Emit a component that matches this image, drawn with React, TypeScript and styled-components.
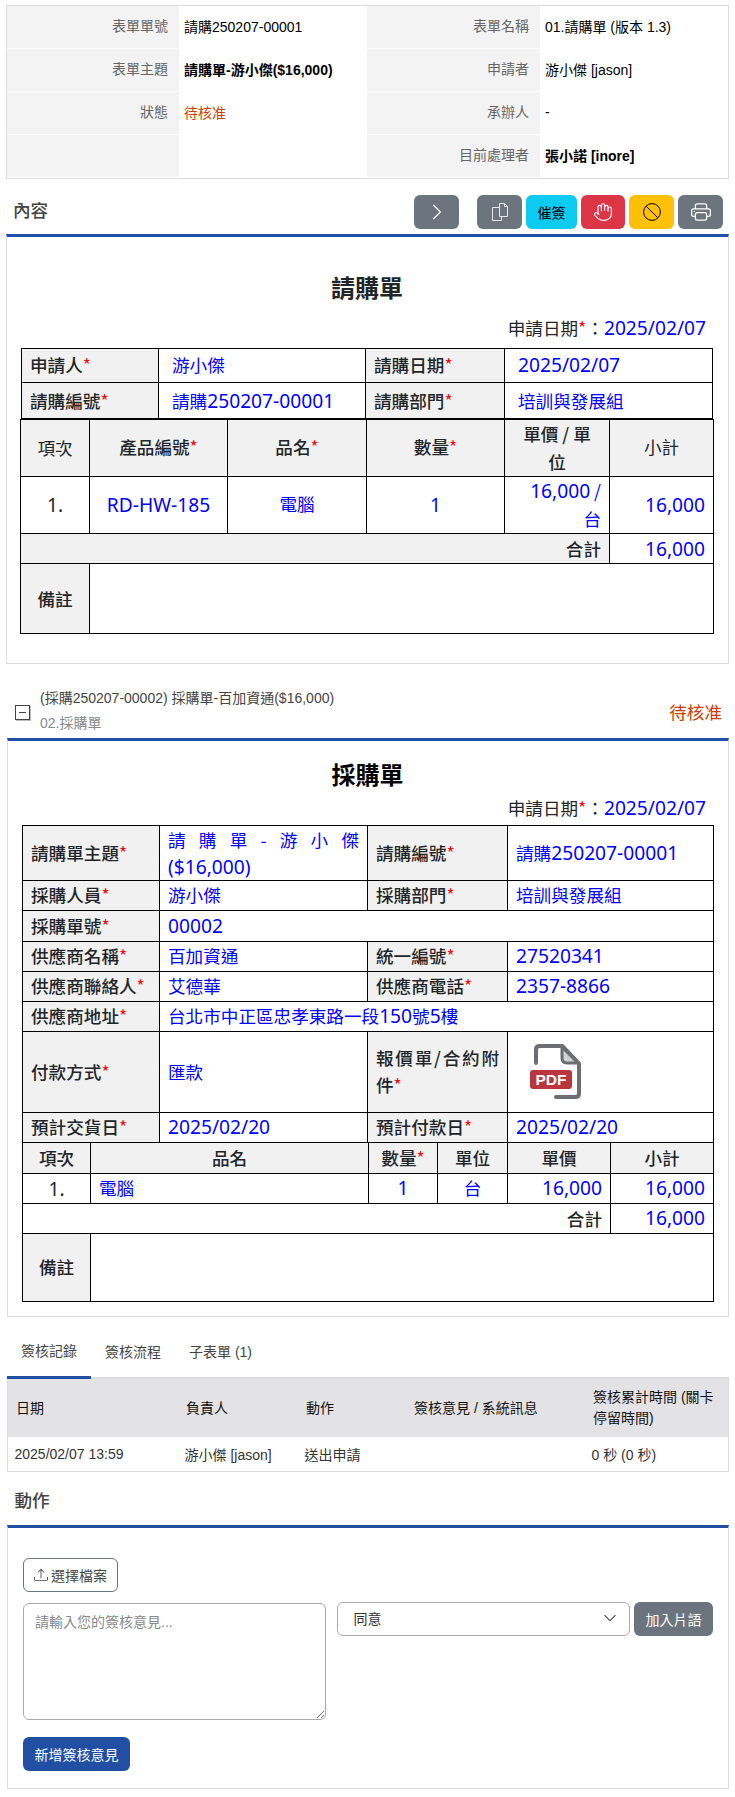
import React from "react";
import styled, { createGlobalStyle } from "styled-components";
import { BsChevronRight, BsPrinter, BsUpload, BsChevronDown } from "react-icons/bs";
import { Hand } from "lucide-react";

const BLUE = "#214fa4";
const BORDER = "#dcdcdc";
const SANS = `"Liberation Sans", "Noto Sans CJK TC", sans-serif`;
const FORM = `"Noto Sans CJK TC", "Noto Sans", sans-serif`;

const Global = createGlobalStyle`
  html, body { margin: 0; padding: 0; background: #fff; }
  body { font-family: ${SANS}; font-size: 14px; color: #333; }
  * { box-sizing: border-box; }
`;

const Page = styled.div`
  width: 735px;
  padding: 5px 6px 8px 6px;
`;

const InfoGrid = styled.div`
  display: grid;
  grid-template-columns: 172px 188px 173px 188px;
  grid-auto-rows: 43px;
  border: 1px solid ${BORDER};
`;
const InfoLabel = styled.div`
  display: flex;
  align-items: center;
  justify-content: flex-end;
  padding: 0 11px 4px 0;
  background: #f3f3f3;
  border-bottom: 1px solid #fff;
  color: #666;
`;
const InfoValue = styled.div<{ $bold?: boolean; $status?: boolean }>`
  display: flex;
  align-items: center;
  padding: 0 0 4px 5px;
  color: ${(p) => (p.$status ? "#cc3d00" : "#000")};
  font-weight: ${(p) => (p.$bold ? 700 : 400)};
`;

const HeadingRow = styled.div`
  display: flex;
  align-items: center;
  justify-content: space-between;
  margin-top: 16px;
  padding: 0 6px 5px 7px;
`;
const HeadingTitle = styled.h2`
  margin: 0;
  padding-bottom: 2px;
  font: 500 17.6px/26px ${SANS};
  color: #444;
`;
const ButtonBar = styled.div`
  display: flex;
  align-items: center;
  gap: 4px;
`;
const IconButton = styled.button<{ $bg: string; $fg?: string; $w?: number; $mr?: number }>`
  display: flex;
  align-items: center;
  justify-content: center;
  width: ${(p) => p.$w ?? 45}px;
  height: 34px;
  margin-right: ${(p) => p.$mr ?? 0}px;
  padding: 0;
  border: 0;
  border-radius: 6px;
  background: ${(p) => p.$bg};
  color: ${(p) => p.$fg ?? "#fff"};
  font: 400 14px ${SANS};
`;

const Card = styled.div<{ $bottom: number }>`
  border: 1px solid ${BORDER};
  border-top: 3px solid ${BLUE};
  padding: 0 15px ${(p) => p.$bottom}px 14px;
`;
const FormTitle = styled.h1<{ $top: number; $color: string }>`
  margin: ${(p) => p.$top}px 0 0;
  text-align: center;
  font: 700 24px/32px ${FORM};
  color: ${(p) => p.$color};
`;
const DateLine = styled.div<{ $top: number; $bottom: number }>`
  margin: ${(p) => p.$top}px 7px ${(p) => p.$bottom}px 0;
  text-align: right;
  font: 400 17.6px/28px ${FORM};
  color: #212529;
`;
const Star = styled.span`
  color: #f00;
  font-weight: 400;
`;
const Blue = styled.span`
  color: #00f;
`;
const Lat = styled.span`
  font-family: "Noto Sans", sans-serif;
  font-size: 19.2px;
  font-weight: 400;
  line-height: 1;
`;

const FormTable = styled.table<{ $wide?: boolean; $lh: number; $join?: boolean }>`
  width: ${(p) => (p.$wide ? 693 : 691)}px;
  margin: ${(p) => (p.$join ? "-1px" : "0")} ${(p) => (p.$wide ? "-1px" : "0")} 0;
  table-layout: fixed;
  border-collapse: collapse;
  font: 400 17.6px/${(p) => p.$lh}px ${FORM};
  color: #212529;
`;
const Col = styled.col<{ $w: number }>`
  width: ${(p) => p.$w}px;
`;
const Row = styled.tr<{ $h: number }>`
  height: ${(p) => p.$h}px;
`;
const LabelCell = styled.th<{ $align?: string; $weight?: number; $tight?: boolean }>`
  padding: 0 8px ${(p) => (p.$tight ? 0 : 2)}px;
  border: 1px solid #000;
  background: #f1f1f1;
  text-align: ${(p) => p.$align ?? "justify"};
  font-weight: ${(p) => p.$weight ?? 500};
`;
const ValueCell = styled.td<{ $align?: string; $pad?: number; $tight?: boolean }>`
  padding: 0 8px ${(p) => (p.$tight ? 0 : 2)}px ${(p) => p.$pad ?? 8}px;
  border: 1px solid #000;
  text-align: ${(p) => p.$align ?? "justify"};
  color: #00f;
`;
const PlainCell = styled.td<{ $align?: string }>`
  padding: 0 8px;
  border: 1px solid #000;
  text-align: ${(p) => p.$align ?? "right"};
  font-weight: 500;
`;
const TotalCell = styled(PlainCell)<{ $shade?: boolean }>`
  background: ${(p) => (p.$shade ? "#f1f1f1" : "#fff")};
`;

const SubSection = styled.section`
  margin-left: 1px;
`;
const SubHeader = styled.div`
  display: flex;
  align-items: center;
  margin-top: 21px;
  padding: 0 7px 3px 8px;
`;
const Toggle = styled.span`
  display: flex;
  align-items: center;
  justify-content: center;
  flex: none;
  width: 15px;
  height: 15px;
  margin: 4px 10px 0 0;
  border: 1px solid #444;
  box-shadow: 1px 1px 0 #bbb;
`;
const ToggleBar = styled.span`
  width: 7px;
  height: 1px;
  background: #444;
`;
const SubText = styled.div`
  flex: 1;
`;
const SubTitle = styled.div`
  line-height: 26px;
  color: #444;
`;
const SubMeta = styled.div`
  line-height: 24px;
  color: #888;
`;
const SubStatus = styled.div`
  margin-top: 4px;
  font: 400 17.6px/26px ${FORM};
  color: #cc3d00;
`;

const Tabs = styled.div`
  display: flex;
  align-items: flex-start;
  margin-top: 22px;
  border-bottom: 2px solid ${BORDER};
`;
const Tab = styled.div<{ $active?: boolean }>`
  height: ${(p) => (p.$active ? 40 : 38)}px;
  padding: ${(p) => (p.$active ? "0" : "1px")} 14px 0;
  margin-bottom: ${(p) => (p.$active ? -2 : 0)}px;
  border-bottom: ${(p) => (p.$active ? `3px solid ${BLUE}` : "0")};
  line-height: 24px;
  color: #444;
`;

const LogBox = styled.div`
  border: 1px solid ${BORDER};
  border-top: 0;
`;
const LogTable = styled.table`
  width: 100%;
  table-layout: fixed;
  border-collapse: collapse;
`;
const LogHead = styled.th`
  height: 58px;
  padding: 0 8px;
  background: #e3e3e6;
  text-align: left;
  font-weight: 400;
  line-height: 21px;
  color: #111;
`;
const LogCell = styled.td`
  height: 34px;
  padding: 0 7px 0 6.5px;
  color: #333;
`;

const ActionTitle = styled.h2`
  margin: 17px 0 12px;
  padding-left: 7.5px;
  font: 500 17.6px/24px ${SANS};
  color: #444;
`;
const ActionBody = styled.div`
  padding: 30px 0 0 1px;
`;
const UploadButton = styled.button`
  display: flex;
  align-items: center;
  gap: 3px;
  width: 95px;
  height: 34px;
  padding: 0 0 0 10px;
  border: 1px solid #6c757d;
  border-radius: 6px;
  background: #fff;
  color: #444;
  font: 400 14px ${SANS};
`;
const InputRow = styled.div`
  display: flex;
  align-items: flex-start;
  margin-top: 10px;
`;
const Comment = styled.textarea`
  display: block;
  width: 303px;
  height: 117px;
  margin: 1px 11px 0 0;
  padding: 8px 11px;
  border: 1px solid #aaa;
  border-radius: 6px;
  font: 400 14px/20px ${SANS};
  outline: 0;
  &::placeholder {
    color: #888;
  }
`;
const SelectWrap = styled.div`
  position: relative;
  width: 294px;
  margin-right: 4px;
`;
const Select = styled.select`
  display: block;
  width: 100%;
  height: 34px;
  padding: 0 30px 0 16px;
  border: 1px solid #aaa;
  border-radius: 6px;
  background: #fff;
  appearance: none;
  color: #333;
  font: 400 14px ${SANS};
`;
const SelectArrow = styled.span`
  position: absolute;
  top: 9px;
  right: 13px;
  display: flex;
  color: #333;
  pointer-events: none;
`;
const SmallButton = styled.button`
  width: 79px;
  height: 34px;
  padding: 0;
  border: 0;
  border-radius: 6px;
  background: #6c757d;
  color: #fff;
  font: 400 14px ${SANS};
`;
const SubmitButton = styled.button`
  display: block;
  width: 107px;
  height: 34px;
  margin-top: 17px;
  padding: 0;
  border: 0;
  border-radius: 6px;
  background: ${BLUE};
  color: #fff;
  font: 400 14px ${SANS};
`;
const PdfWrap = styled.div`
  display: flex;
  padding-left: 14px;
`;

const PdfIcon = () => (
  <svg width="52" height="56" viewBox="0 0 52 56" role="img" aria-label="PDF">
    <path d="M6 19V5.5Q6 2 9.5 2H32.5L49 19.5V49.5Q49 53 45.5 53H26" fill="none" stroke="#6d6e71" strokeWidth="4" strokeLinecap="round" strokeLinejoin="round" />
    <path d="M32 3V14Q32 19 37 19H48Z" fill="#d2d2d3" stroke="#6d6e71" strokeWidth="3" strokeLinejoin="round" />
    <rect x="0" y="26" width="42" height="19" rx="3" fill="#b9363d" />
    <text x="21" y="41" textAnchor="middle" fill="#fff" fontFamily="Liberation Sans, sans-serif" fontWeight="700" fontSize="15.5">PDF</text>
  </svg>
);
const CopyIcon = () => (
  <svg width="16" height="18" viewBox="0 0 16 18" fill="none" stroke="#e4e6e8" strokeWidth="1">
    <path d="M7.5 .5H12.5L15.5 3.5V13.5H7.5Z" />
    <path d="M12.5 .5V3.5H15.5" />
    <path d="M7.5 4.5H.5V17.5H9.5V13.5" />
  </svg>
);
const BanIcon = () => (
  <svg width="18" height="18" viewBox="0 0 18 18" fill="none" stroke="#000" strokeWidth="1">
    <circle cx="9" cy="9" r="8.4" />
    <path d="M3.1 3.1L14.9 14.9" />
  </svg>
);

const Req = ({ children }: { children: React.ReactNode }) => (
  <>
    {children}
    <Star>*</Star>
  </>
);

const infoRows: [string, React.ReactNode, string, React.ReactNode][] = [
  ["表單單號", <InfoValue>請購250207-00001</InfoValue>, "表單名稱", <InfoValue>01.請購單 (版本 1.3)</InfoValue>],
  ["表單主題", <InfoValue $bold>請購單-游小傑($16,000)</InfoValue>, "申請者", <InfoValue>游小傑 [jason]</InfoValue>],
  ["狀態", <InfoValue $status>待核准</InfoValue>, "承辦人", <InfoValue>-</InfoValue>],
  ["", <InfoValue />, "目前處理者", <InfoValue $bold>張小諾 [inore]</InfoValue>],
];

export default function App() {
  return (
    <Page>
      <Global />
      <InfoGrid>
        {infoRows.map(([a, b, c, d]) => (
          <React.Fragment key={c}>
            <InfoLabel>{a}</InfoLabel>
            {b}
            <InfoLabel>{c}</InfoLabel>
            {d}
          </React.Fragment>
        ))}
      </InfoGrid>

      <HeadingRow>
        <HeadingTitle>內容</HeadingTitle>
        <ButtonBar>
          <IconButton $bg="#6c757d" $mr={14}><BsChevronRight size={18} /></IconButton>
          <IconButton $bg="#6c757d"><CopyIcon /></IconButton>
          <IconButton $bg="#0dcaf0" $fg="#000" $w={51}>催簽</IconButton>
          <IconButton $bg="#dc3545" $w={44}><Hand size={20} strokeWidth={1.3} /></IconButton>
          <IconButton $bg="#ffc107" $fg="#000"><BanIcon /></IconButton>
          <IconButton $bg="#6c757d"><BsPrinter size={20} /></IconButton>
        </ButtonBar>
      </HeadingRow>

      <Card $bottom={29}>
        <FormTitle $top={34} $color="#212529">請購單</FormTitle>
        <DateLine $top={11} $bottom={6}>
          <Req>申請日期</Req>：<Blue><Lat>2025/02/07</Lat></Blue>
        </DateLine>
        <FormTable $lh={28}>
          <colgroup><Col $w={137} /><Col $w={207} /><Col $w={139} /><Col $w={208} /></colgroup>
          <tbody>
            <Row $h={34}>
              <LabelCell><Req>申請人</Req></LabelCell>
              <ValueCell $pad={13}>游小傑</ValueCell>
              <LabelCell><Req>請購日期</Req></LabelCell>
              <ValueCell $pad={13}><Lat>2025/02/07</Lat></ValueCell>
            </Row>
            <Row $h={36}>
              <LabelCell $tight><Req>請購編號</Req></LabelCell>
              <ValueCell $tight $pad={13}>請購<Lat>250207-00001</Lat></ValueCell>
              <LabelCell $tight><Req>請購部門</Req></LabelCell>
              <ValueCell $tight $pad={13}>培訓與發展組</ValueCell>
            </Row>
          </tbody>
        </FormTable>
        <FormTable $wide $lh={28}>
          <colgroup><Col $w={69} /><Col $w={138} /><Col $w={139} /><Col $w={138} /><Col $w={105} /><Col $w={104} /></colgroup>
          <tbody>
            <Row $h={57}>
              <LabelCell $tight $align="center" $weight={400}>項次</LabelCell>
              <LabelCell $align="center"><Req>產品編號</Req></LabelCell>
              <LabelCell $align="center"><Req>品名</Req></LabelCell>
              <LabelCell $align="center"><Req>數量</Req></LabelCell>
              <LabelCell $tight $align="center">單價 / 單<br />位</LabelCell>
              <LabelCell $align="center" $weight={400}>小計</LabelCell>
            </Row>
            <Row $h={57}>
              <PlainCell $align="center"><Lat>1.</Lat></PlainCell>
              <ValueCell $tight $align="center"><Lat>RD-HW-185</Lat></ValueCell>
              <ValueCell $align="center">電腦</ValueCell>
              <ValueCell $tight $align="center"><Lat>1</Lat></ValueCell>
              <ValueCell $tight $align="right"><Lat>16,000</Lat> /<br />台</ValueCell>
              <ValueCell $tight $align="right"><Lat>16,000</Lat></ValueCell>
            </Row>
            <Row $h={30}>
              <TotalCell $shade colSpan={5}>合計</TotalCell>
              <ValueCell $tight $align="right"><Lat>16,000</Lat></ValueCell>
            </Row>
            <Row $h={70}>
              <LabelCell $tight $align="center">備註</LabelCell>
              <ValueCell colSpan={5} />
            </Row>
          </tbody>
        </FormTable>
      </Card>

      <SubSection>
        <SubHeader>
          <Toggle><ToggleBar /></Toggle>
          <SubText>
            <SubTitle>(採購250207-00002) 採購單-百加資通($16,000)</SubTitle>
            <SubMeta>02.採購單</SubMeta>
          </SubText>
          <SubStatus>待核准</SubStatus>
        </SubHeader>
        <Card $bottom={14}>
          <FormTitle $top={17} $color="#000">採購單</FormTitle>
          <DateLine $top={4} $bottom={3}>
            <Req>申請日期</Req>：<Blue><Lat>2025/02/07</Lat></Blue>
          </DateLine>
          <FormTable $lh={27}>
            <colgroup><Col $w={137} /><Col $w={208} /><Col $w={140} /><Col $w={206} /></colgroup>
            <tbody>
              <Row $h={55}>
                <LabelCell><Req>請購單主題</Req></LabelCell>
                <ValueCell $tight>請購單-游小傑<Lat>($16,000)</Lat></ValueCell>
                <LabelCell><Req>請購編號</Req></LabelCell>
                <ValueCell>請購<Lat>250207-00001</Lat></ValueCell>
              </Row>
              <Row $h={30}>
                <LabelCell><Req>採購人員</Req></LabelCell>
                <ValueCell>游小傑</ValueCell>
                <LabelCell><Req>採購部門</Req></LabelCell>
                <ValueCell>培訓與發展組</ValueCell>
              </Row>
              <Row $h={31}>
                <LabelCell><Req>採購單號</Req></LabelCell>
                <ValueCell colSpan={3}><Lat>00002</Lat></ValueCell>
              </Row>
              <Row $h={30}>
                <LabelCell><Req>供應商名稱</Req></LabelCell>
                <ValueCell>百加資通</ValueCell>
                <LabelCell><Req>統一編號</Req></LabelCell>
                <ValueCell><Lat>27520341</Lat></ValueCell>
              </Row>
              <Row $h={30}>
                <LabelCell><Req>供應商聯絡人</Req></LabelCell>
                <ValueCell>艾德華</ValueCell>
                <LabelCell><Req>供應商電話</Req></LabelCell>
                <ValueCell><Lat>2357-8866</Lat></ValueCell>
              </Row>
              <Row $h={30}>
                <LabelCell><Req>供應商地址</Req></LabelCell>
                <ValueCell colSpan={3}>台北市中正區忠孝東路一段<Lat>150</Lat>號<Lat>5</Lat>樓</ValueCell>
              </Row>
              <Row $h={81}>
                <LabelCell><Req>付款方式</Req></LabelCell>
                <ValueCell>匯款</ValueCell>
                <LabelCell><Req>報價單/合約附件</Req></LabelCell>
                <ValueCell $tight><PdfWrap><PdfIcon /></PdfWrap></ValueCell>
              </Row>
              <Row $h={30}>
                <LabelCell><Req>預計交貨日</Req></LabelCell>
                <ValueCell><Lat>2025/02/20</Lat></ValueCell>
                <LabelCell><Req>預計付款日</Req></LabelCell>
                <ValueCell><Lat>2025/02/20</Lat></ValueCell>
              </Row>
            </tbody>
          </FormTable>
          <FormTable $lh={27} $join>
            <colgroup><Col $w={68} /><Col $w={278} /><Col $w={69} /><Col $w={70} /><Col $w={103} /><Col $w={103} /></colgroup>
            <tbody>
              <Row $h={31}>
                <LabelCell $align="center">項次</LabelCell>
                <LabelCell $align="center">品名</LabelCell>
                <LabelCell $align="center"><Req>數量</Req></LabelCell>
                <LabelCell $align="center">單位</LabelCell>
                <LabelCell $align="center">單價</LabelCell>
                <LabelCell $align="center">小計</LabelCell>
              </Row>
              <Row $h={30}>
                <PlainCell $align="center"><Lat>1.</Lat></PlainCell>
                <ValueCell>電腦</ValueCell>
                <ValueCell $align="center"><Lat>1</Lat></ValueCell>
                <ValueCell $align="center">台</ValueCell>
                <ValueCell $align="right"><Lat>16,000</Lat></ValueCell>
                <ValueCell $align="right"><Lat>16,000</Lat></ValueCell>
              </Row>
              <Row $h={30}>
                <TotalCell colSpan={5}>合計</TotalCell>
                <ValueCell $align="right"><Lat>16,000</Lat></ValueCell>
              </Row>
              <Row $h={68}>
                <LabelCell $align="center" as="td">備註</LabelCell>
                <ValueCell colSpan={5} />
              </Row>
            </tbody>
          </FormTable>
        </Card>

        <Tabs>
          <Tab $active>簽核記錄</Tab>
          <Tab>簽核流程</Tab>
          <Tab>子表單 (1)</Tab>
        </Tabs>
        <LogBox>
          <LogTable>
            <colgroup><Col $w={170} /><Col $w={120} /><Col $w={108} /><Col $w={179} /><Col $w={143} /></colgroup>
            <thead>
              <tr>
                <LogHead>日期</LogHead>
                <LogHead>負責人</LogHead>
                <LogHead>動作</LogHead>
                <LogHead>簽核意見 / 系統訊息</LogHead>
                <LogHead>簽核累計時間 (關卡停留時間)</LogHead>
              </tr>
            </thead>
            <tbody>
              <tr>
                <LogCell>2025/02/07 13:59</LogCell>
                <LogCell>游小傑 [jason]</LogCell>
                <LogCell>送出申請</LogCell>
                <LogCell />
                <LogCell>0 秒 (0 秒)</LogCell>
              </tr>
            </tbody>
          </LogTable>
        </LogBox>

        <ActionTitle>動作</ActionTitle>
        <Card $bottom={17}>
          <ActionBody>
            <UploadButton><BsUpload size={14} />選擇檔案</UploadButton>
            <InputRow>
              <Comment placeholder="請輸入您的簽核意見..." />
              <SelectWrap>
                <Select defaultValue="同意">
                  <option>同意</option>
                  <option>不同意</option>
                </Select>
                <SelectArrow><BsChevronDown size={14} /></SelectArrow>
              </SelectWrap>
              <SmallButton>加入片語</SmallButton>
            </InputRow>
            <SubmitButton>新增簽核意見</SubmitButton>
          </ActionBody>
        </Card>
      </SubSection>
    </Page>
  );
}
